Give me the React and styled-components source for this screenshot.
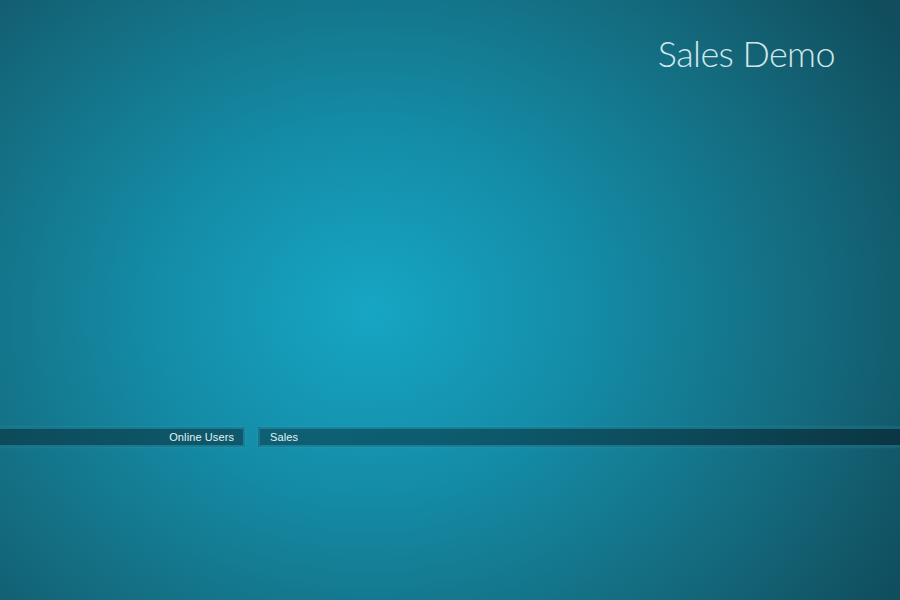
import React from "react";
import styled, { createGlobalStyle } from "styled-components";

const GlobalStyle = createGlobalStyle`
  html, body {
    margin: 0;
    padding: 0;
    height: 100%;
  }
  #root {
    height: 100%;
  }
`;

export const Screen = styled.div`
  width: 100%;
  height: 100vh;
  display: flex;
  flex-direction: column;
  overflow: hidden;
  background-color: #137a90;
  background-image: radial-gradient(
    ellipse 620px 520px at 370px 310px,
    #16a6c4 0%,
    #148ca7 35%,
    #146a7d 72%,
    #104e5e 100%
  );
  font-family: "Liberation Sans", Arial, sans-serif;
`;

export const Header = styled.header`
  display: flex;
  justify-content: flex-end;
  padding: 31px 65px 0 0;
  height: 400px;
  box-sizing: border-box;
`;

export const Title = styled.h1`
  margin: 0;
  font-family: "Lato", sans-serif;
  font-weight: 300;
  font-size: 36px;
  letter-spacing: -0.6px;
  color: #d2e6ec;
`;

export const TabRow = styled.div`
  display: flex;
  gap: 13px;
  margin-top: 27px;
`;

export const Tab = styled.div`
  height: 20px;
  box-sizing: border-box;
  display: flex;
  align-items: center;
  justify-content: ${(p) => (p.$align === "right" ? "flex-end" : "flex-start")};
  padding: 0 ${(p) => (p.$align === "right" ? "9px" : "0")} 0
    ${(p) => (p.$align === "right" ? "0" : "10px")};
  width: ${(p) => p.$width || "auto"};
  flex: ${(p) => (p.$grow ? "1" : "none")};
  background: ${(p) =>
    p.$grow
      ? "linear-gradient(to right, rgba(5, 35, 45, 0.45), rgba(5, 25, 35, 0.55))"
      : "rgba(5, 35, 45, 0.5)"};
  border: 2px solid rgba(60, 190, 220, 0.35);
  border-left-width: ${(p) => (p.$align === "right" ? "0" : "2px")};
  border-right-width: ${(p) => (p.$grow ? "0" : "2px")};
  box-shadow: 0 0 3px rgba(60, 200, 230, 0.25);
  color: #e6f2f5;
  font-size: 11px;
  letter-spacing: 0.1px;
`;

export default function App() {
  return (
    <>
      <GlobalStyle />
      <Screen>
        <Header>
          <Title>Sales Demo</Title>
        </Header>
        <TabRow>
          <Tab $align="right" $width="245px">
            Online Users
          </Tab>
          <Tab $grow>Sales</Tab>
        </TabRow>
      </Screen>
    </>
  );
}
